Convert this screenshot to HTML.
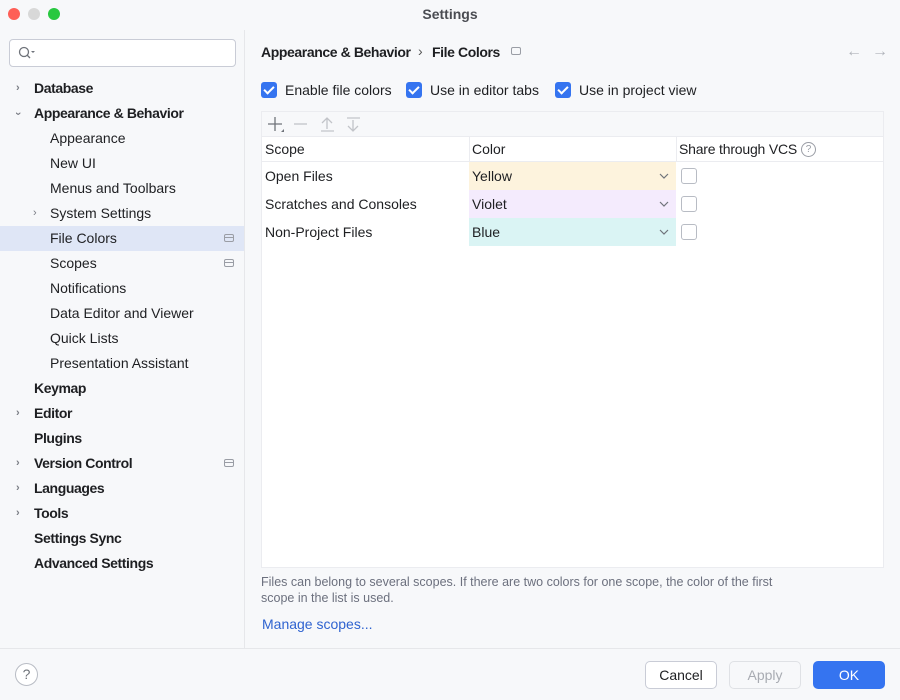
<!DOCTYPE html>
<html><head><meta charset="utf-8"><style>
*{box-sizing:border-box;margin:0;padding:0}
body{width:900px;height:700px;background:#f7f8fa;font-family:"Liberation Sans",sans-serif;font-size:14px;color:#1e1f22;position:relative;overflow:hidden}
.a{position:absolute}
.dot{position:absolute;top:8px;width:12px;height:12px;border-radius:50%}
.it{position:absolute;left:0;width:244px;height:25px;line-height:25px;white-space:nowrap;top:0}
.b{font-weight:bold;letter-spacing:-0.4px}
.chev{position:absolute;left:16px;top:0;color:#7a7d85;font-size:11px}
.pin{position:absolute;left:224px;top:8px;width:10px;height:8px;border:1px solid #9a9da5;border-radius:2px}
.pin:after{content:"";position:absolute;left:0;right:0;top:2px;border-top:1px solid #9a9da5}
.cb{position:absolute;width:16px;height:16px;background:#3574f0;border-radius:3px}
.cb:after{content:"";position:absolute;left:5px;top:2px;width:4px;height:8px;border:solid #fff;border-width:0 2px 2px 0;transform:rotate(45deg)}
.ecb{position:absolute;width:16px;height:16px;background:#fff;border:1px solid #b8bcc4;border-radius:3px}
.btn{position:absolute;top:661px;height:28px;border-radius:5px;text-align:center;line-height:26px;font-size:14px}
</style></head><body>
<div class="dot" style="left:8px;background:#fe5f57"></div>
<div class="dot" style="left:28px;background:#d8d8d8"></div>
<div class="dot" style="left:48px;background:#28c840"></div>
<div class="a" style="left:0;width:900px;top:6px;text-align:center;font-weight:bold;color:#4a4c52;font-size:14px">Settings</div>
<div class="a" style="left:244px;top:30px;width:1px;height:619px;background:#e6e7ea"></div>
<div class="a" style="left:0;top:648px;width:900px;height:1px;background:#e6e7ea"></div>
<div class="a" style="left:9px;top:39px;width:227px;height:28px;background:#fff;border:1px solid #c9ccd6;border-radius:4px"></div>
<svg class="a" style="left:17px;top:45px" width="20" height="16"><circle cx="7" cy="7" r="4.5" fill="none" stroke="#6f737a" stroke-width="1.3"/><path d="M10 10l3 3" stroke="#6f737a" stroke-width="1.3"/><path d="M14 6h4l-2 2z" fill="#6f737a"/></svg>
<div class="a" style="left:0;top:226px;width:244px;height:25px;background:#dfe6f6"></div>
<div class="it b" style="top:76px"><span class="chev">&#x203A;</span><span style="margin-left:34px">Database</span></div>
<div class="it b" style="top:101px"><span class="chev" style="transform:rotate(90deg);display:inline-block">&#x203A;</span><span style="margin-left:34px;position:absolute">Appearance &amp; Behavior</span></div>
<div class="it" style="top:126px;padding-left:50px">Appearance</div>
<div class="it" style="top:151px;padding-left:50px">New UI</div>
<div class="it" style="top:176px;padding-left:50px">Menus and Toolbars</div>
<div class="it" style="top:201px;padding-left:50px"><span class="chev" style="left:33px">&#x203A;</span>System Settings</div>
<div class="it" style="top:226px;padding-left:50px">File Colors<span class="pin"></span></div>
<div class="it" style="top:251px;padding-left:50px">Scopes<span class="pin"></span></div>
<div class="it" style="top:276px;padding-left:50px">Notifications</div>
<div class="it" style="top:301px;padding-left:50px">Data Editor and Viewer</div>
<div class="it" style="top:326px;padding-left:50px">Quick Lists</div>
<div class="it" style="top:351px;padding-left:50px">Presentation Assistant</div>
<div class="it b" style="top:376px;padding-left:34px">Keymap</div>
<div class="it b" style="top:401px;padding-left:34px"><span class="chev">&#x203A;</span>Editor</div>
<div class="it b" style="top:426px;padding-left:34px">Plugins</div>
<div class="it b" style="top:451px;padding-left:34px"><span class="chev">&#x203A;</span>Version Control<span class="pin"></span></div>
<div class="it b" style="top:476px;padding-left:34px"><span class="chev">&#x203A;</span>Languages</div>
<div class="it b" style="top:501px;padding-left:34px"><span class="chev">&#x203A;</span>Tools</div>
<div class="it b" style="top:526px;padding-left:34px">Settings Sync</div>
<div class="it b" style="top:551px;padding-left:34px">Advanced Settings</div>
<div class="a" style="left:15px;top:663px;width:23px;height:23px;border:1px solid #b8bcc4;border-radius:50%;text-align:center;line-height:21px;color:#6f737a;background:#fff">?</div>

<div class="a b" style="left:261px;top:44px">Appearance &amp; Behavior</div>
<div class="a" style="left:418px;top:43px;color:#555">&#x203A;</div>
<div class="a b" style="left:432px;top:44px">File Colors</div>
<div class="a" style="left:511px;top:47px;width:10px;height:8px;border:1px solid #9a9da5;border-radius:2px"></div>
<div class="a" style="left:846px;top:43px;color:#b0b3ba;font-size:16px">&#x2190;</div>
<div class="a" style="left:872px;top:43px;color:#b0b3ba;font-size:16px">&#x2192;</div>

<div class="cb" style="left:261px;top:82px"></div><div class="a" style="left:285px;top:82px">Enable file colors</div>
<div class="cb" style="left:406px;top:82px"></div><div class="a" style="left:430px;top:82px">Use in editor tabs</div>
<div class="cb" style="left:555px;top:82px"></div><div class="a" style="left:579px;top:82px">Use in project view</div>

<div class="a" style="left:261px;top:111px;width:623px;height:457px;background:#fff;border:1px solid #ebecf0"></div>
<div class="a" style="left:262px;top:112px;width:621px;height:25px;background:#f7f8fa;border-bottom:1px solid #ebecf0"></div>
<svg class="a" style="left:266px;top:115px" width="100" height="20"><path d="M9 2v14M2 9h14" stroke="#6f737a" stroke-width="1.3"/><path d="M15 17h3v-3z" fill="#6f737a"/><path d="M28 9h13" stroke="#c2c4c9" stroke-width="1.3"/><path d="M61 3v11M56 8l5-5 5 5M55 16h13" stroke="#c2c4c9" stroke-width="1.3" fill="none"/><path d="M87 5v11M82 11l5 5 5-5M81 3h13" stroke="#c2c4c9" stroke-width="1.3" fill="none"/></svg>
<div class="a" style="left:262px;top:161px;width:621px;height:1px;background:#ebecf0"></div>
<div class="a" style="left:469px;top:137px;width:1px;height:24px;background:#ebecf0"></div>
<div class="a" style="left:676px;top:137px;width:1px;height:24px;background:#ebecf0"></div>
<div class="a" style="left:265px;top:141px">Scope</div>
<div class="a" style="left:472px;top:141px">Color</div>
<div class="a" style="left:679px;top:141px;letter-spacing:-0.2px">Share through VCS</div>
<div class="a" style="left:801px;top:142px;width:15px;height:15px;border:1px solid #9a9da5;border-radius:50%;font-size:10px;text-align:center;line-height:13px;color:#9a9da5">?</div>

<div class="a" style="left:469px;top:162px;width:207px;height:28px;background:#fdf3dd"></div>
<div class="a" style="left:469px;top:190px;width:207px;height:28px;background:#f4ebfd"></div>
<div class="a" style="left:469px;top:218px;width:207px;height:28px;background:#daf4f4"></div>
<div class="a" style="left:265px;top:168px">Open Files</div>
<div class="a" style="left:265px;top:196px">Scratches and Consoles</div>
<div class="a" style="left:265px;top:224px">Non-Project Files</div>
<div class="a" style="left:472px;top:168px">Yellow</div>
<div class="a" style="left:472px;top:196px">Violet</div>
<div class="a" style="left:472px;top:224px">Blue</div>
<svg class="a" style="left:659px;top:172px" width="10" height="70"><path d="M1 2l4 4 4-4M1 30l4 4 4-4M1 58l4 4 4-4" stroke="#6f737a" stroke-width="1.2" fill="none"/></svg>
<div class="ecb" style="left:681px;top:168px"></div>
<div class="ecb" style="left:681px;top:196px"></div>
<div class="ecb" style="left:681px;top:224px"></div>

<div class="a" style="left:261px;top:574px;font-size:12.5px;color:#6c707e;line-height:16px;width:530px">Files can belong to several scopes. If there are two colors for one scope, the color of the first scope in the list is used.</div>
<div class="a" style="left:262px;top:616px;color:#2f63d0">Manage scopes...</div>

<div class="btn" style="left:645px;width:72px;background:#fff;border:1px solid #c9ccd6">Cancel</div>
<div class="btn" style="left:729px;width:72px;border:1px solid #dfe1e5;color:#a8abb2">Apply</div>
<div class="btn" style="left:813px;width:72px;background:#3574f0;color:#fff;border:1px solid #3574f0">OK</div>
</body></html>
